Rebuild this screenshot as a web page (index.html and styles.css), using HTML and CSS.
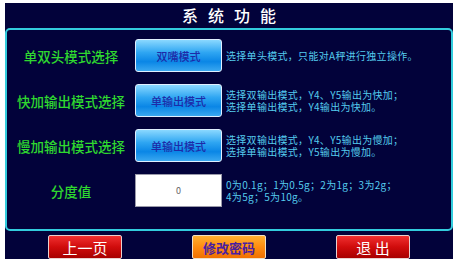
FILE: index.html
```html
<!DOCTYPE html>
<html lang="zh-CN">
<head>
    <meta charset="UTF-8">
    <meta name="viewport" content="width=device-width, initial-scale=1.0">
    <title>系统功能</title>
    <link rel="stylesheet" href="styles.css">
</head>
<body>
    <div class="screen">
        <div class="title">系统功能</div>
        <div class="panel">
            <div class="row">
                <div class="label">单双头模式选择</div>
                <button class="mode-btn">双嘴模式</button>
                <div class="desc">选择单头模式，只能对A秤进行独立操作。</div>
            </div>
            <div class="row">
                <div class="label">快加输出模式选择</div>
                <button class="mode-btn">单输出模式</button>
                <div class="desc">选择双输出模式，Y4、Y5输出为快加；<br>选择单输出模式，Y4输出为快加。</div>
            </div>
            <div class="row">
                <div class="label">慢加输出模式选择</div>
                <button class="mode-btn">单输出模式</button>
                <div class="desc">选择双输出模式，Y4、Y5输出为慢加；<br>选择单输出模式，Y5输出为慢加。</div>
            </div>
            <div class="row">
                <div class="label">分度值</div>
                <div class="value-box">0</div>
                <div class="desc">0为0.1g；1为0.5g；2为1g；3为2g；<br>4为5g；5为10g。</div>
            </div>
        </div>
        <div class="footer">
            <button class="nav-btn red">上一页</button>
            <button class="nav-btn orange">修改密码</button>
            <button class="nav-btn red">退 出</button>
        </div>
    </div>
</body>
</html>
```

FILE: styles.css
```css
body {
    margin: 0;
    background-color: #ffffff;
    font-family: "Noto Sans CJK SC", "Liberation Serif", serif;
}

.screen {
    margin: 3px 4px 0 5px;
    width: 448px;
    height: 256px;
    background-color: #02023a;
    display: flex;
    flex-direction: column;
}

.title {
    height: 25px;
    line-height: 25px;
    text-align: center;
    color: #ffffff;
    font-size: 16px;
    font-weight: 500;
    letter-spacing: 10px;
    padding-left: 10px;
}

.panel {
    height: 203px;
    border: 2px solid #33ccdd;
    border-radius: 5px;
    padding-top: 9px;
    display: flex;
    flex-direction: column;
    gap: 12px;
    box-sizing: border-box;
}

.row {
    display: flex;
    align-items: center;
    height: 33px;
}

.label {
    width: 128px;
    text-align: center;
    color: #2fd82f;
    font-size: 13.5px;
    font-weight: 500;
}

.mode-btn,
.value-box {
    width: 87px;
    height: 33px;
    box-sizing: border-box;
    flex-shrink: 0;
}

.mode-btn {
    border: 1px solid #dfefff;
    border-radius: 3px;
    background: linear-gradient(to bottom, #8ad8ff 0%, #2fa6f2 40%, #0a86e6 70%, #3aa8f0 100%);
    color: #1d2aa8;
    font-family: inherit;
    font-size: 11px;
    font-weight: 500;
    padding: 0;
}

.value-box {
    background-color: #ffffff;
    border: 1px solid #9a9aaa;
    color: #666666;
    font-size: 9px;
    line-height: 31px;
    text-align: center;
}

.desc {
    margin-left: 4px;
    color: #55ccee;
    font-size: 10px;
    line-height: 12px;
    letter-spacing: 0.3px;
}

.footer {
    display: flex;
    justify-content: center;
    gap: 70px;
    padding-top: 4px;
}

.nav-btn {
    width: 74px;
    height: 24px;
    border: 1px solid #e8d0d0;
    border-radius: 2px;
    font-family: inherit;
    font-size: 15px;
    padding: 0;
}

.nav-btn.red {
    background: linear-gradient(to bottom, #f03030 0%, #d00c0c 50%, #a80000 100%);
    color: #ffffff;
}

.nav-btn.orange {
    background: linear-gradient(to bottom, #ffb030 0%, #ff8c10 50%, #f07000 100%);
    color: #4a1fa0;
    border-color: #f0e0c8;
    font-size: 13px;
    font-weight: 700;
}
```
